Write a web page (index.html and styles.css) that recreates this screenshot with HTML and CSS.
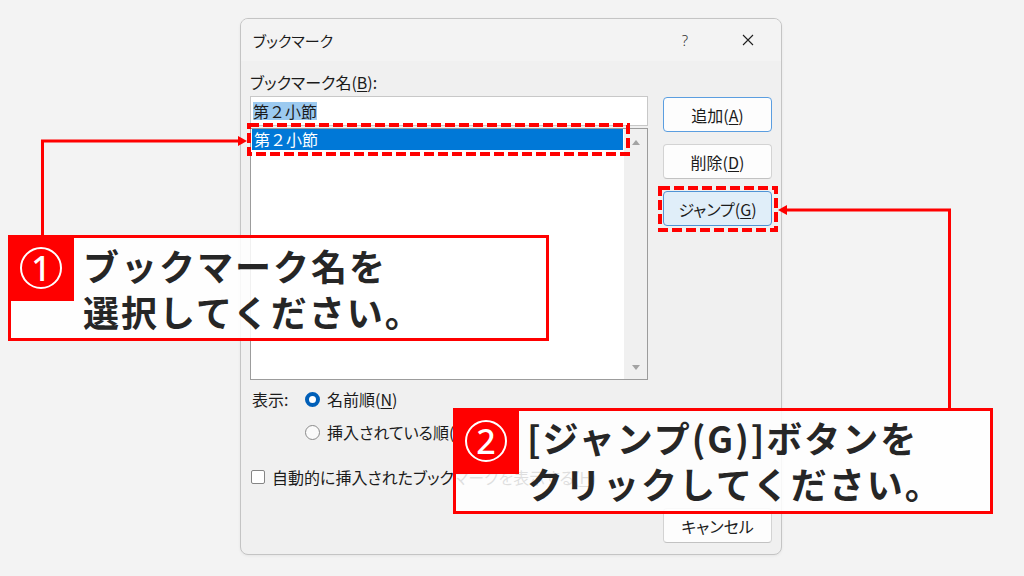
FILE: index.html
```html
<!DOCTYPE html>
<html lang="ja">
<head>
<meta charset="utf-8">
<title>ブックマーク</title>
<link rel="stylesheet" href="styles.css">
</head>
<body>
<div class="dialog">
  <div class="titlebar">
    <span class="title">ブックマーク</span>
    <span class="tb-btn help">?</span>
    <span class="tb-btn close"><svg width="12" height="12" viewBox="0 0 12 12"><path d="M1 1 L11 11 M11 1 L1 11" stroke="#1f1f1f" stroke-width="1.1" fill="none"/></svg></span>
  </div>
  <div class="content">
    <div class="main">
      <div class="left">
        <div class="label">ブックマーク名(<u>B</u>):</div>
        <div class="input"><span class="sel">第２小節</span></div>
        <div class="list">
          <div class="items"><div class="row selected">第２小節</div></div>
          <div class="scrollbar"><span class="arrow up"></span><span class="arrow down"></span></div>
        </div>
      </div>
      <div class="right">
        <button class="btn default">追加(<u>A</u>)</button>
        <button class="btn">削除(<u>D</u>)</button>
        <button class="btn focus">ジャンプ(<u>G</u>)</button>
      </div>
    </div>
    <div class="display">
      <span class="display-label">表示:</span>
      <div class="radios">
        <label class="opt"><span class="radio on"></span>名前順(<u>N</u>)</label>
        <label class="opt"><span class="radio"></span>挿入されている順(<u>I</u>)</label>
      </div>
    </div>
    <label class="check"><span class="box"></span>自動的に挿入されたブックマークを表示する(<u>H</u>)</label>
    <div class="footer"><button class="btn">キャンセル</button></div>
  </div>
</div>

<svg class="annot" width="1024" height="576" viewBox="0 0 1024 576">
  <rect x="249" y="125" width="379" height="29" fill="none" stroke="#ff0000" stroke-width="4" stroke-dasharray="10 4"/>
  <rect x="660" y="188" width="116" height="42" fill="none" stroke="#ff0000" stroke-width="4" stroke-dasharray="10 4"/>
  <polyline points="42.5,236 42.5,141 240,141" fill="none" stroke="#ff0000" stroke-width="3"/>
  <polygon points="247,141 238,136 238,146" fill="#ff0000"/>
  <polyline points="949.5,409 949.5,210 786,210" fill="none" stroke="#ff0000" stroke-width="3"/>
  <polygon points="778,210 787,205 787,215" fill="#ff0000"/>
</svg>

<div class="callout c1">
  <div class="badge"><span class="num">1</span></div>
  <div class="ctext">ブックマーク名を<br>選択してください。</div>
</div>
<div class="callout c2">
  <div class="badge"><span class="num">2</span></div>
  <div class="ctext">[ジャンプ(G)]ボタンを<br>クリックしてください。</div>
</div>
</body>
</html>
```

FILE: styles.css
```css
* { box-sizing: border-box; }

html, body {
  margin: 0;
}

body {
  width: 1024px;
  height: 576px;
  overflow: hidden;
  position: relative;
  padding: 18px 0 0 240px;
  background: #f3f3f3;
  font-family: "Noto Sans CJK JP", "Noto Sans", sans-serif;
  color: #1b1b1b;
}

.dialog {
  width: 542px;
  height: 537px;
  border: 1px solid #c4c4c4;
  border-radius: 8px;
  background: #f0f0f0;
  display: flex;
  flex-direction: column;
  overflow: hidden;
  box-shadow: 0 1px 3px rgba(0,0,0,0.06);
}

.titlebar {
  height: 42px;
  flex: none;
  display: flex;
  align-items: center;
  padding-left: 12px;
  background: #f3f3f3;
}

.title {
  font-size: 15px;
  font-feature-settings: "palt";
  flex: 1;
}

.tb-btn {
  width: 46px;
  height: 30px;
  display: flex;
  align-items: center;
  justify-content: center;
}

.help {
  font-size: 15px;
  font-family: "Noto Sans", sans-serif;
  font-weight: 300;
  color: #333;
  margin-right: 17px;
}

.close { margin-right: 10px; }

.content {
  padding: 0 9px;
  display: flex;
  flex-direction: column;
  font-size: 16px;
  font-feature-settings: "palt";
}

u { text-underline-offset: 2px; }

.main {
  display: flex;
  gap: 15px;
  margin-top: 10px;
}

.left {
  width: 398px;
  display: flex;
  flex-direction: column;
}

.label {
  height: 22px;
  line-height: 22px;
}

.input {
  margin-top: 3px;
  height: 30px;
  border: 1px solid #c8c8c8;
  background: #fff;
  display: flex;
  align-items: center;
  padding-left: 2px;
}

.sel {
  background: #9ccaf0;
  line-height: 18px;
  height: 18px;
  font-feature-settings: normal;
}

.list {
  margin-top: 2px;
  height: 252px;
  border: 1px solid #9c9c9c;
  background: #fff;
  display: flex;
}

.items {
  flex: 1;
  padding: 0 1px;
}

.row {
  height: 21px;
  line-height: 21px;
  padding-left: 2px;
  font-feature-settings: normal;
}

.row.selected {
  background: #0078d7;
  color: #fff;
}

.scrollbar {
  width: 23px;
  background: #f0f0f0;
  display: flex;
  flex-direction: column;
  align-items: center;
  justify-content: space-between;
  padding: 11px 0 9px;
}

.arrow {
  width: 0;
  height: 0;
  border-left: 4px solid transparent;
  border-right: 4px solid transparent;
}

.arrow.up { border-bottom: 5px solid #a3a3a3; }
.arrow.down { border-top: 5px solid #a3a3a3; }

.right {
  width: 109px;
  padding-top: 26px;
  display: flex;
  flex-direction: column;
  gap: 12px;
}

.btn {
  width: 109px;
  height: 35px;
  border: 1px solid #d3d3d3;
  border-bottom-color: #c2c2c2;
  border-radius: 4px;
  background: #fdfdfd;
  font-family: inherit;
  font-size: 16px;
  font-feature-settings: "palt";
  color: #1b1b1b;
  padding: 0;
}

.btn.default {
  border-color: #5b9ee0;
}

.btn.focus {
  background: #e0eef9;
  border-color: #4f93d6;
}

.display {
  display: flex;
  margin-top: 9px;
  line-height: 20px;
}

.display-label {
  width: 55px;
  padding-left: 2px;
}

.radios {
  display: flex;
  flex-direction: column;
  gap: 13px;
}

.opt {
  display: flex;
  align-items: center;
  height: 20px;
}

.radio {
  width: 15px;
  height: 15px;
  border-radius: 50%;
  border: 1px solid #8a8a8a;
  background: #fafafa;
  margin-right: 7px;
  flex: none;
}

.radio.on {
  border: 4.5px solid #005fb8;
  background: #fff;
}

.check {
  display: flex;
  align-items: center;
  height: 20px;
  margin-top: 25px;
  line-height: 20px;
}

.box {
  width: 14px;
  height: 14px;
  border: 1px solid #858585;
  border-radius: 2px;
  background: #fff;
  margin-left: 1px;
  margin-right: 7px;
  flex: none;
}

.footer {
  display: flex;
  justify-content: flex-end;
  margin-top: 21px;
}

.annot {
  position: absolute;
  left: 0;
  top: 0;
  pointer-events: none;
}

.callout {
  position: absolute;
  border: 3px solid #ff0000;
  background: rgba(255,255,255,0.86);
  display: flex;
  align-items: flex-start;
}

.c1 { left: 8px; top: 235px; width: 541px; height: 106px; }
.c2 { left: 453px; top: 408px; width: 540px; height: 106px; }

.badge {
  width: 66px;
  height: 66px;
  margin: -3px 0 0 -3px;
  background: #ff0000;
  display: flex;
  align-items: center;
  justify-content: center;
  flex: none;
}

.num {
  width: 42px;
  height: 42px;
  border: 2px solid #fff;
  border-radius: 50%;
  color: #fff;
  font-family: "Noto Sans", sans-serif;
  font-size: 34px;
  font-weight: 500;
  line-height: 38px;
  text-align: center;
}

.ctext {
  font-size: 36px;
  font-weight: 700;
  letter-spacing: 2px;
  line-height: 46px;
  color: #262626;
  white-space: nowrap;
}

.c1 .ctext { padding: 4px 0 0 9px; }
.c2 .ctext { padding: 3px 0 0 8px; }
```
